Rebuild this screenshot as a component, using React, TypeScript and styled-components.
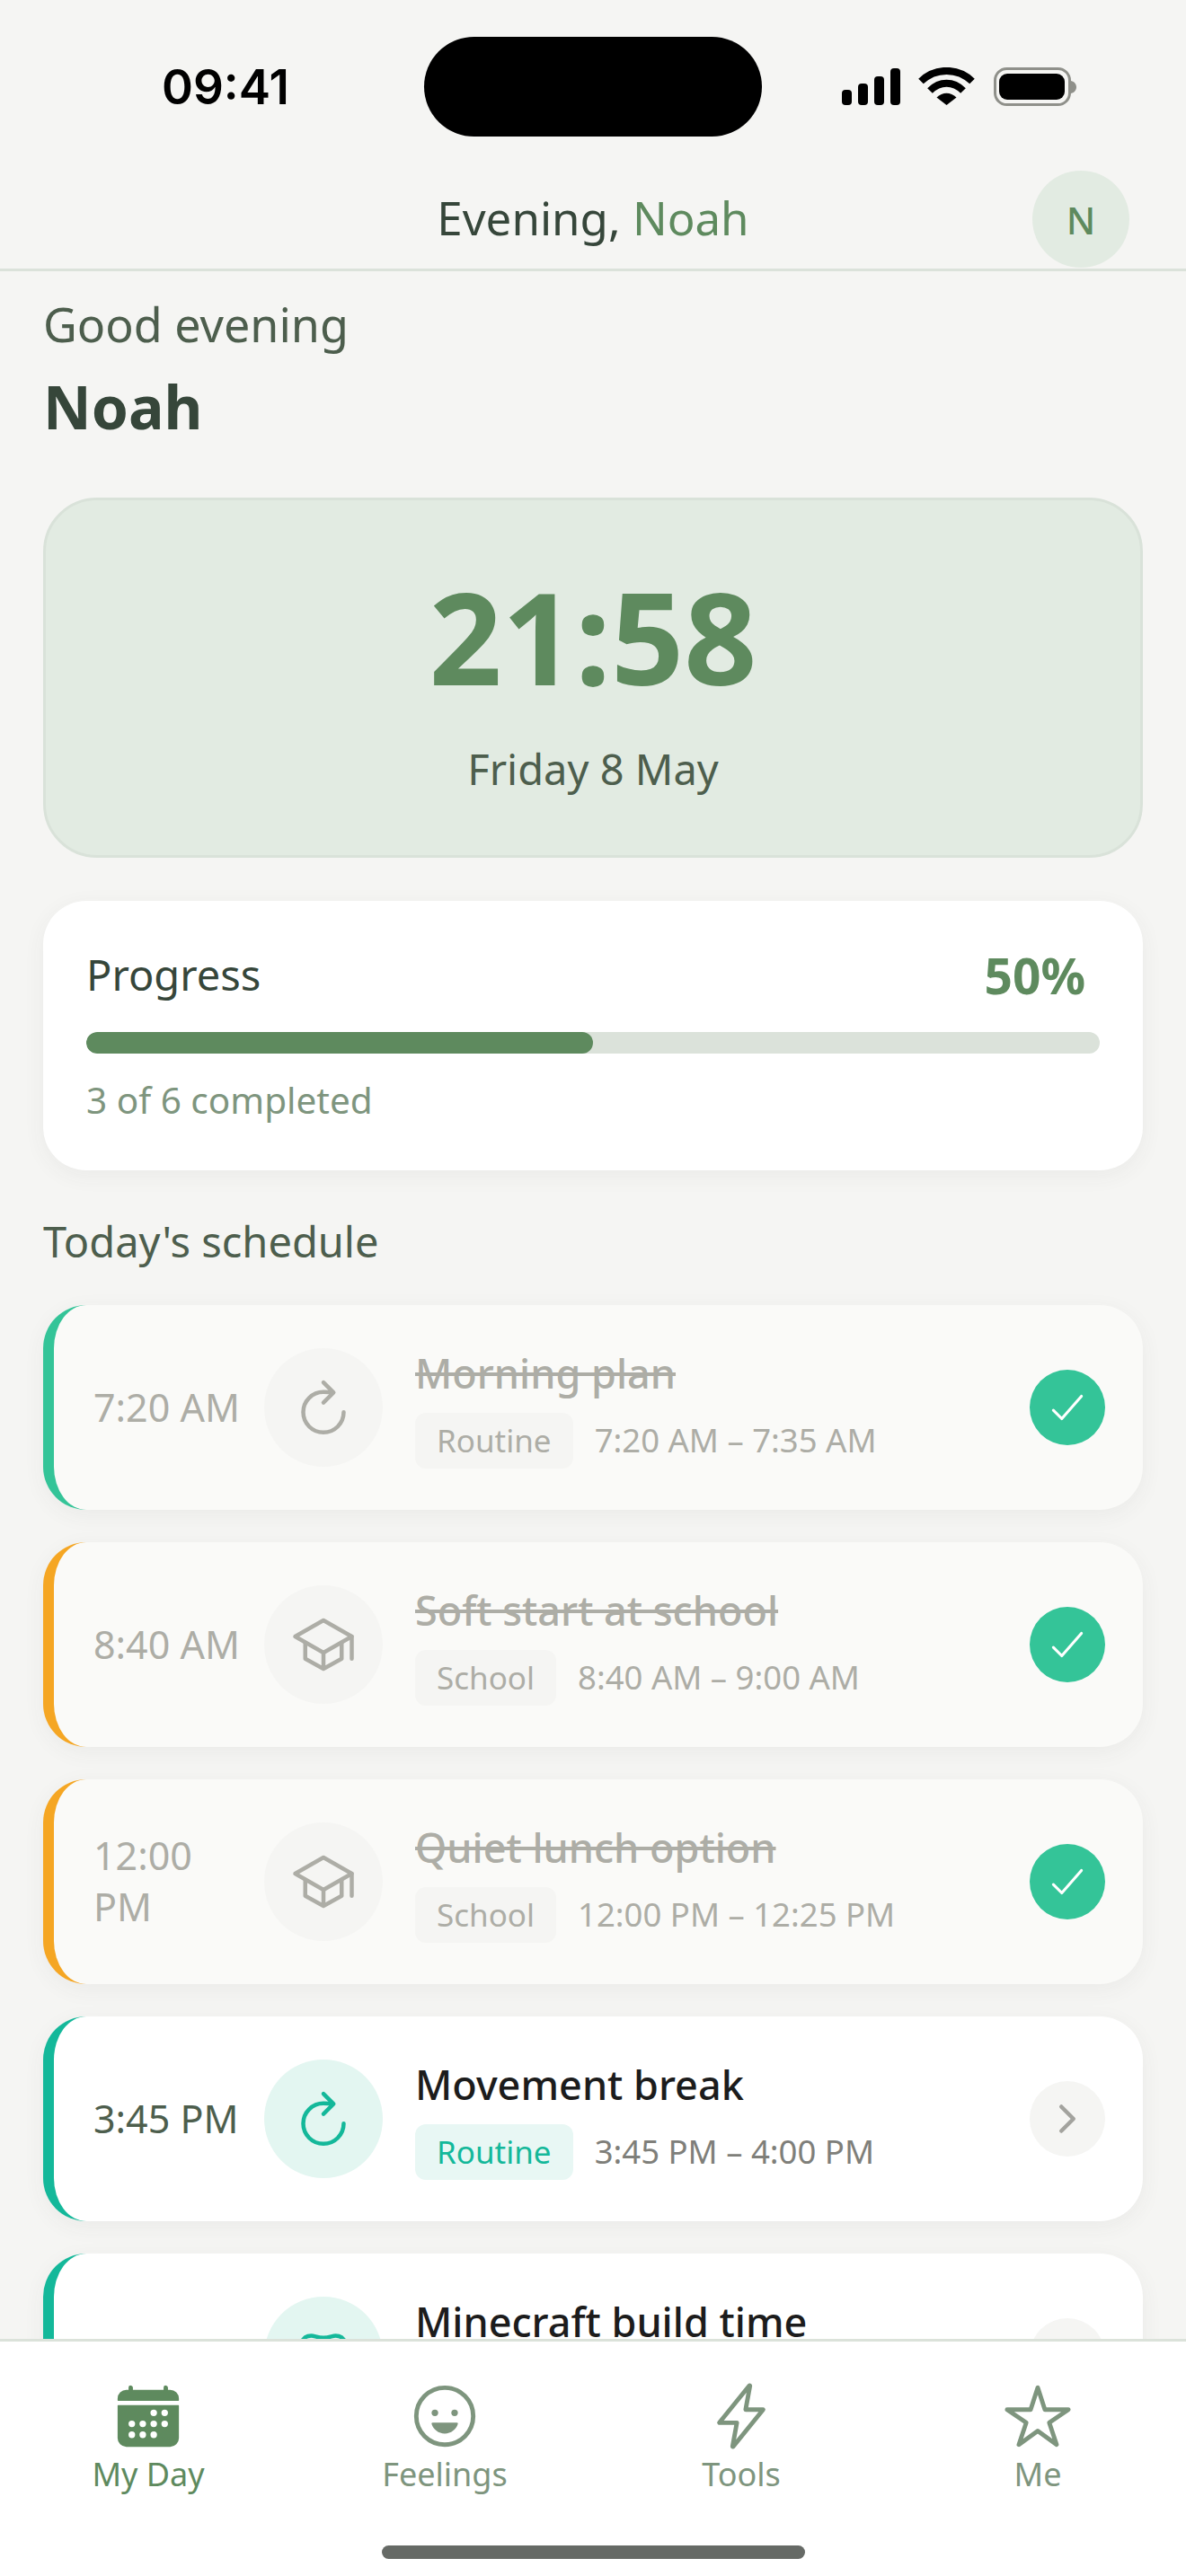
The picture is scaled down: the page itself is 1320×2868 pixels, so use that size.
import React from "react";
import styled, { createGlobalStyle } from "styled-components";
import {
  IoCalendar,
  IoCheckmark,
  IoChevronForward,
  IoFlashOutline,
  IoGameControllerOutline,
  IoHappyOutline,
  IoRefreshOutline,
  IoSchoolOutline,
  IoStarOutline,
} from "react-icons/io5";

const TEAL = "#14b89a";
const AMBER = "#f5a623";
const GREEN = "#5e8a5e";
const MUTED = "#7e957e";

const GlobalStyle = createGlobalStyle`
  html, body {
    margin: 0;
    padding: 0;
    background: #f5f5f3;
  }
  * {
    box-sizing: border-box;
  }
  body {
    font-family: "Noto Sans", "Open Sans", sans-serif;
  }
`;

const Screen = styled.div`
  width: 1320px;
  height: 2868px;
  display: flex;
  flex-direction: column;
  overflow: hidden;
  background: #f5f5f3;
`;

const StatusBar = styled.div`
  height: 190px;
  flex-shrink: 0;
  display: grid;
  grid-template-columns: 472px 376px 1fr;
  padding-top: 41px;
  align-items: start;
`;

const Clock = styled.div`
  padding: 31px 0 0 180px;
  font-family: Inter, sans-serif;
  font-size: 53px;
  line-height: 50px;
  font-weight: 600;
  color: #000;
`;

const Island = styled.div`
  height: 111px;
  border-radius: 56px;
  background: #000;
`;

const StatusIcons = styled.div`
  padding: 34px 0 0 89px;
  display: flex;
  align-items: flex-start;
`;

const Header = styled.header`
  height: 115px;
  flex-shrink: 0;
  margin-top: -3px;
  padding-bottom: 3px;
  position: relative;
  display: flex;
  align-items: center;
  justify-content: center;
  border-bottom: 3px solid #dbe2da;
  font-size: 51px;
  font-weight: 400;
  color: #36463a;
  span {
    color: ${GREEN};
  }
`;

const Avatar = styled.div`
  position: absolute;
  right: 63px;
  top: 3px;
  width: 108px;
  height: 108px;
  border-radius: 50%;
  background: #e2ebe2;
  color: ${GREEN};
  font-size: 42px;
  font-weight: 500;
  display: flex;
  align-items: center;
  justify-content: center;
`;

const Main = styled.main`
  flex: 1;
  min-height: 0;
  overflow: hidden;
  padding: 24px 48px 0;
`;

const Greeting = styled.div`
  font-size: 52px;
  line-height: 70px;
  color: #4d5e4d;
`;

const Name = styled.h1`
  margin: 11px 0 0;
  font-size: 66px;
  line-height: 90px;
  font-weight: 700;
  color: #36463a;
`;

const TimeCard = styled.section`
  margin-top: 57px;
  height: 401px;
  border: 3px solid #d9e2d9;
  border-radius: 60px;
  background: #e2ebe2;
  display: flex;
  flex-direction: column;
  align-items: center;
  padding-top: 66px;
`;

const BigTime = styled.div`
  font-size: 142px;
  line-height: 170px;
  font-weight: 700;
  color: ${GREEN};
`;

const DateText = styled.div`
  margin-top: 31px;
  font-size: 47px;
  line-height: 64px;
  color: #4d5e4d;
`;

const ProgressCard = styled.section`
  margin-top: 48px;
  height: 300px;
  border-radius: 48px;
  background: #fff;
  box-shadow: 0 6px 24px rgba(60, 70, 60, 0.06);
  padding: 49px 48px 0;
`;

const ProgressTop = styled.div`
  display: flex;
  justify-content: space-between;
  align-items: center;
  padding-right: 16px;
  height: 66px;
`;

const ProgressLabel = styled.div`
  font-size: 47px;
  font-weight: 400;
  color: #36463a;
`;

const ProgressValue = styled.div`
  font-size: 55px;
  font-weight: 700;
  color: ${GREEN};
`;

const Track = styled.div`
  margin-top: 31px;
  height: 24px;
  border-radius: 12px;
  background: #dbe2da;
  overflow: hidden;
`;

const Fill = styled.div`
  height: 100%;
  border-radius: 12px;
  background: ${GREEN};
`;

const ProgressNote = styled.div`
  margin-top: 24px;
  font-size: 40.5px;
  line-height: 56px;
  color: ${MUTED};
`;

const SectionTitle = styled.h2`
  margin: 47px 0 0;
  font-size: 47px;
  line-height: 64px;
  font-weight: 400;
  color: #4d5e4d;
`;

const List = styled.div`
  margin-top: 39px;
  display: flex;
  flex-direction: column;
  gap: 36px;
`;

const Card = styled.div<{ $accent: string; $done: boolean }>`
  height: 228px;
  flex-shrink: 0;
  display: flex;
  align-items: center;
  gap: 36px;
  padding: 0 42px;
  border-radius: 48px;
  border-left: 12px solid ${(p) => p.$accent};
  background: ${(p) => (p.$done ? "#fafaf8" : "#fff")};
  box-shadow: 0 6px 24px rgba(60, 70, 60, 0.06);
`;

const TimeCol = styled.div<{ $done: boolean }>`
  width: 164px;
  margin: -2px -10px 0 2px;
  flex-shrink: 0;
  font-size: 43px;
  line-height: 57px;
  color: ${(p) => (p.$done ? "#adada6" : "#4d5e4d")};
`;

const IconCircle = styled.div<{ $done: boolean }>`
  width: 132px;
  height: 132px;
  flex-shrink: 0;
  border-radius: 50%;
  display: flex;
  align-items: center;
  justify-content: center;
  font-size: 72px;
  background: ${(p) => (p.$done ? "#f5f5f3" : "#e3f6f1")};
  color: ${(p) => (p.$done ? "#adada6" : TEAL)};
`;

const Body = styled.div`
  flex: 1;
  min-width: 0;
  display: flex;
  flex-direction: column;
  gap: 12px;
`;

const Title = styled.div<{ $done: boolean }>`
  font-size: 45px;
  line-height: 64px;
  font-weight: 500;
  margin-top: -2px;
  color: ${(p) => (p.$done ? "#adada6" : "#1c1c1c")};
  text-decoration: ${(p) => (p.$done ? "line-through" : "none")};
`;

const Meta = styled.div`
  display: flex;
  align-items: center;
  gap: 24px;
`;

const Tag = styled.span<{ $done: boolean; $tone: string }>`
  height: 62px;
  padding: 0 24px 2px;
  border-radius: 12px;
  display: flex;
  align-items: center;
  font-size: 35px;
  background: ${(p) => (p.$done ? "#f5f5f3" : "#e8f7f4")};
  color: ${(p) => (p.$done ? "#adada6" : p.$tone)};
`;

const Range = styled.span<{ $done: boolean }>`
  font-size: 36.5px;
  margin-top: -2px;
  color: ${(p) => (p.$done ? "#adada6" : "#7f7f7a")};
`;

const Check = styled.div`
  width: 84px;
  height: 84px;
  flex-shrink: 0;
  border-radius: 50%;
  background: #34c498;
  color: #fff;
  font-size: 50px;
  display: flex;
  align-items: center;
  justify-content: center;
`;

const Chevron = styled.div`
  width: 84px;
  height: 84px;
  flex-shrink: 0;
  border-radius: 50%;
  background: #f5f5f3;
  color: #a3a39e;
  font-size: 48px;
  display: flex;
  align-items: center;
  justify-content: center;
`;

const BottomNav = styled.nav`
  height: 264px;
  flex-shrink: 0;
  position: relative;
  background: #fff;
  border-top: 3px solid #dbe2da;
  display: grid;
  grid-template-columns: repeat(4, 330px);
  align-items: start;
  padding-top: 44px;
`;

const NavItem = styled.div<{ $active?: boolean }>`
  display: flex;
  flex-direction: column;
  align-items: center;
  gap: 1px;
  font-size: 36px;
  line-height: 50px;
  font-weight: 400;
  color: ${(p) => (p.$active ? GREEN : MUTED)};
  svg {
    font-size: 78px;
  }
`;

const HomeBar = styled.div`
  position: absolute;
  left: 425px;
  bottom: 19px;
  width: 471px;
  height: 15px;
  border-radius: 8px;
  background: #666a66;
`;

const StatusGlyphs = () => (
  <svg width="262" height="44" viewBox="0 0 262 44">
    <rect x="0" y="25" width="11" height="17" rx="4" fill="#000" />
    <rect x="18" y="18" width="11" height="24" rx="4" fill="#000" />
    <rect x="36" y="10" width="11" height="32" rx="4" fill="#000" />
    <rect x="54" y="1" width="11" height="41" rx="4" fill="#000" />
    <path
      d="M88 14.5C104 -1 129 -1 145 14.5"
      transform="translate(0 1)"
      fill="none"
      stroke="#000"
      strokeWidth="8"
    />
    <path d="M98 26C109 15 124 15 135 26" fill="none" stroke="#000" strokeWidth="8" />
    <path d="M105.5 33.5C112 27 121 27 127.5 33.5L116.5 42Z" fill="#000" />
    <rect x="170.5" y="1.5" width="83" height="40" rx="13" fill="none" stroke="#8f908a" strokeWidth="3" />
    <rect x="175" y="7" width="73" height="29" rx="9" fill="#000" />
    <path d="M255 15c4 1 6 4 6 7s-2 6-6 7z" fill="#8f908a" />
  </svg>
);

type Item = {
  time: string;
  icon: React.ReactNode;
  title: string;
  tag: string;
  range: string;
  accent: string;
  tone: string;
  done: boolean;
};

const items: Item[] = [
  {
    time: "7:20 AM",
    icon: <IoRefreshOutline />,
    title: "Morning plan",
    tag: "Routine",
    range: "7:20 AM – 7:35 AM",
    accent: "#34c498",
    tone: TEAL,
    done: true,
  },
  {
    time: "8:40 AM",
    icon: <IoSchoolOutline />,
    title: "Soft start at school",
    tag: "School",
    range: "8:40 AM – 9:00 AM",
    accent: AMBER,
    tone: AMBER,
    done: true,
  },
  {
    time: "12:00 PM",
    icon: <IoSchoolOutline />,
    title: "Quiet lunch option",
    tag: "School",
    range: "12:00 PM – 12:25 PM",
    accent: AMBER,
    tone: AMBER,
    done: true,
  },
  {
    time: "3:45 PM",
    icon: <IoRefreshOutline />,
    title: "Movement break",
    tag: "Routine",
    range: "3:45 PM – 4:00 PM",
    accent: TEAL,
    tone: TEAL,
    done: false,
  },
  {
    time: "4:30 PM",
    icon: <IoGameControllerOutline />,
    title: "Minecraft build time",
    tag: "Routine",
    range: "4:30 PM – 5:00 PM",
    accent: TEAL,
    tone: TEAL,
    done: false,
  },
];

const App = () => {
  return (
    <Screen>
      <GlobalStyle />
      <StatusBar>
        <Clock>09:41</Clock>
        <Island />
        <StatusIcons>
          <StatusGlyphs />
        </StatusIcons>
      </StatusBar>
      <Header>
        <div>
          Evening, <span>Noah</span>
        </div>
        <Avatar>N</Avatar>
      </Header>
      <Main>
        <Greeting>Good evening</Greeting>
        <Name>Noah</Name>
        <TimeCard>
          <BigTime>21:58</BigTime>
          <DateText>Friday 8 May</DateText>
        </TimeCard>
        <ProgressCard>
          <ProgressTop>
            <ProgressLabel>Progress</ProgressLabel>
            <ProgressValue>50%</ProgressValue>
          </ProgressTop>
          <Track>
            <Fill style={{ width: "50%" }} />
          </Track>
          <ProgressNote>3 of 6 completed</ProgressNote>
        </ProgressCard>
        <SectionTitle>Today's schedule</SectionTitle>
        <List>
          {items.map((item) => (
            <Card key={item.title} $accent={item.accent} $done={item.done}>
              <TimeCol $done={item.done}>{item.time}</TimeCol>
              <IconCircle $done={item.done}>{item.icon}</IconCircle>
              <Body>
                <Title $done={item.done}>{item.title}</Title>
                <Meta>
                  <Tag $done={item.done} $tone={item.tone}>
                    {item.tag}
                  </Tag>
                  <Range $done={item.done}>{item.range}</Range>
                </Meta>
              </Body>
              {item.done ? (
                <Check>
                  <IoCheckmark />
                </Check>
              ) : (
                <Chevron>
                  <IoChevronForward />
                </Chevron>
              )}
            </Card>
          ))}
        </List>
      </Main>
      <BottomNav>
        <NavItem $active>
          <IoCalendar />
          My Day
        </NavItem>
        <NavItem>
          <IoHappyOutline />
          Feelings
        </NavItem>
        <NavItem>
          <IoFlashOutline />
          Tools
        </NavItem>
        <NavItem>
          <IoStarOutline />
          Me
        </NavItem>
        <HomeBar />
      </BottomNav>
    </Screen>
  );
};

export default App;
